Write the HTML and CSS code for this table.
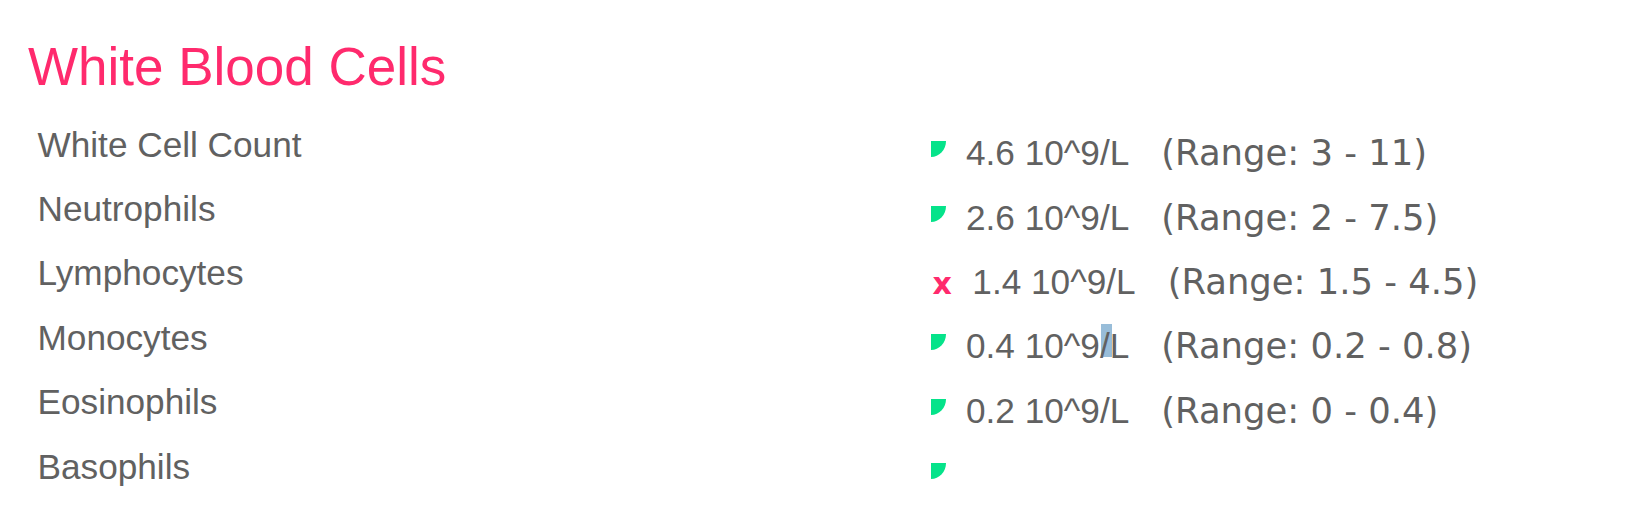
FILE: index.html
```html
<!DOCTYPE html>
<html lang="en">
<head>
<meta charset="utf-8">
<title>White Blood Cells</title>
<link rel="stylesheet" href="styles.css">
</head>
<body>
<section class="panel">
  <h1 class="title">White Blood Cells</h1>
  <div class="results">
    <div class="label">White Cell Count</div>
    <div class="value"><span class="ok"></span><span class="num">4.6 10^9/L</span><span class="range">(Range: 3 - 11)</span></div>

    <div class="label">Neutrophils</div>
    <div class="value"><span class="ok"></span><span class="num">2.6 10^9/L</span><span class="range">(Range: 2 - 7.5)</span></div>

    <div class="label">Lymphocytes</div>
    <div class="value"><span class="bad">x</span><span class="num">1.4 10^9/L</span><span class="range">(Range: 1.5 - 4.5)</span></div>

    <div class="label">Monocytes</div>
    <div class="value"><span class="ok"></span><span class="num">0.4 10^9<span class="sel">/</span>L</span><span class="range">(Range: 0.2 - 0.8)</span></div>

    <div class="label">Eosinophils</div>
    <div class="value"><span class="ok"></span><span class="num">0.2 10^9/L</span><span class="range">(Range: 0 - 0.4)</span></div>

    <div class="label">Basophils</div>
    <div class="value"><span class="ok"></span></div>
  </div>
</section>
</body>
</html>
```
FILE: styles.css
```css
html, body {
  margin: 0;
  padding: 0;
  background: #ffffff;
}

body {
  font-family: "Liberation Sans", Arial, sans-serif;
  color: #616161;
}

.panel {
  padding: 0 28px;
}

.title {
  margin: 37px 0 0;
  font-size: 53px;
  line-height: 60px;
  font-weight: normal;
  color: #ff2a6d;
}

.results {
  margin-top: 15.7px;
  display: grid;
  grid-template-columns: 903px 1fr;
  grid-auto-rows: 64.4px;
  font-size: 35.2px;
  line-height: 64.4px;
}

.label {
  padding-left: 9.5px;
  white-space: nowrap;
}

.value {
  padding-top: 8.6px;
  white-space: nowrap;
}

.ok {
  display: inline-block;
  width: 15px;
  height: 16px;
  margin: 0 20px 8px 0;
  background: #05e38a;
  border-bottom-right-radius: 100% 100%;
  vertical-align: baseline;
}

.bad {
  display: inline-block;
  margin: 0 20.5px 0 1.5px;
  font-family: "DejaVu Sans", sans-serif;
  font-weight: bold;
  font-size: 30px;
  color: #ff2a6d;
}

.num {
  font-family: "Liberation Sans", Arial, sans-serif;
}

.range {
  margin-left: 32px;
  font-family: "DejaVu Sans", sans-serif;
  font-size: 35.4px;
}

.sel {
  display: inline-block;
  height: 28px;
  padding: 5px 3px 0;
  margin: 0 -3px;
  line-height: 33px;
  background: linear-gradient(#98bdd9, #98bdd9) 4.5px 0 / 11.3px 100% no-repeat;
}
```
